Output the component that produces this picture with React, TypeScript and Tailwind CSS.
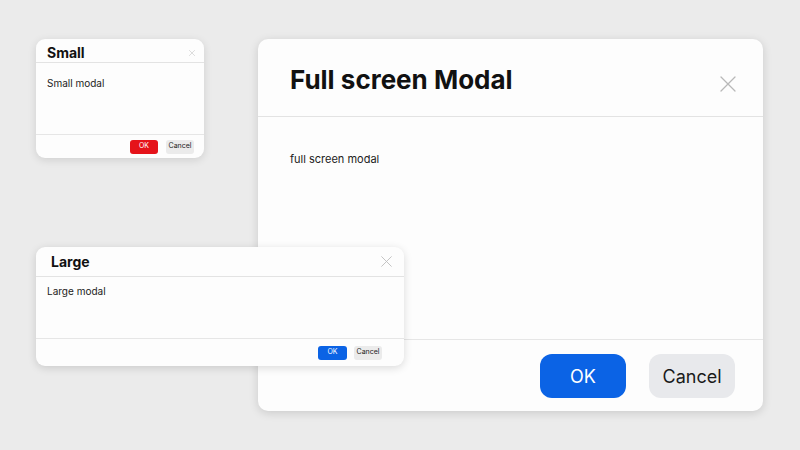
import React from "react";

function XIcon({ size, stroke = 1.5, color = "#b5b5b5" }: { size: number; stroke?: number; color?: string }) {
  return (
    <svg width={size} height={size} viewBox="0 0 16 16" fill="none">
      <path d="M1 1 L15 15 M15 1 L1 15" stroke={color} strokeWidth={stroke} strokeLinecap="round" />
    </svg>
  );
}

export default function App() {
  return (
    <div
      className="relative w-[800px] h-[450px] overflow-hidden bg-[#ebebeb]"
      style={{ fontFamily: "Inter, 'Noto Sans', sans-serif" }}
    >
      {/* Small modal */}
      <div className="absolute left-[36px] top-[39px] w-[168px] h-[119px] flex flex-col rounded-[9px] bg-[#fdfdfd] shadow-[0_2px_8px_rgba(0,0,0,0.12)] overflow-hidden">
        <div className="h-[24px] flex items-center justify-between pl-[11px] pr-[9px] pt-[5px] border-b border-[#e3e3e3]">
          <span className="text-[14px] font-bold text-[#111] leading-none">Small</span>
          <XIcon size={6} stroke={1.6} color="#c8c8c8" />
        </div>
        <div className="flex-1 pl-[11px] pt-[14px] text-[10px] leading-[12px] text-[#222]">Small modal</div>
        <div className="h-[24px] flex items-center justify-end gap-[8px] pr-[10px] border-t border-[#e6e6e6]">
          <div className="w-[28px] h-[14px] rounded-[3px] bg-[#e5131a] flex items-center justify-center text-[7px] text-white">OK</div>
          <div className="w-[28px] h-[14px] rounded-[3px] bg-[#ebebeb] flex items-center justify-center text-[7px] text-[#222]">Cancel</div>
        </div>
      </div>

      {/* Full screen modal */}
      <div className="absolute left-[258px] top-[39px] w-[505px] h-[372px] flex flex-col rounded-[10px] bg-[#fdfdfd] shadow-[0_2px_10px_rgba(0,0,0,0.14)] overflow-hidden">
        <div className="h-[78px] flex items-center justify-between pl-[32px] pr-[27px] pt-[4px] border-b border-[#e3e3e3]">
          <span className="text-[26px] font-bold text-[#111] leading-none">Full screen Modal</span>
          <div className="mt-[8px]"><XIcon size={16} stroke={1.3} color="#b8b8b8" /></div>
        </div>
        <div className="flex-1 pl-[32px] pt-[35px] text-[11px] leading-[14px] text-[#222]">full screen modal</div>
        <div className="h-[72px] flex items-center justify-end gap-[23px] pr-[28px] border-t border-[#e6e6e6]">
          <div className="w-[86px] h-[44px] rounded-[12px] bg-[#0b63e5] flex items-center justify-center text-[18px] text-white pt-[1px]">OK</div>
          <div className="w-[86px] h-[44px] rounded-[12px] bg-[#e8e9ec] flex items-center justify-center text-[18px] text-[#1a1a1a] pt-[1px]">Cancel</div>
        </div>
      </div>

      {/* Large modal */}
      <div className="absolute left-[36px] top-[247px] w-[368px] h-[119px] flex flex-col rounded-[9px] bg-[#fdfdfd] shadow-[0_2px_8px_rgba(0,0,0,0.14)] overflow-hidden">
        <div className="h-[30px] flex items-center justify-between pl-[15px] pr-[12px] border-b border-[#e3e3e3]">
          <span className="text-[14px] font-bold text-[#111] leading-none">Large</span>
          <XIcon size={11} stroke={1.3} color="#bdbdbd" />
        </div>
        <div className="flex-1 pl-[11px] pt-[8px] text-[10px] leading-[12px] text-[#222]">Large modal</div>
        <div className="h-[28px] flex items-center justify-end gap-[7px] pr-[22px] border-t border-[#e6e6e6]">
          <div className="w-[29px] h-[14px] rounded-[3px] bg-[#0b63e5] flex items-center justify-center text-[7px] text-white">OK</div>
          <div className="w-[28px] h-[14px] rounded-[3px] bg-[#ebebeb] flex items-center justify-center text-[7px] text-[#222]">Cancel</div>
        </div>
      </div>
    </div>
  );
}
